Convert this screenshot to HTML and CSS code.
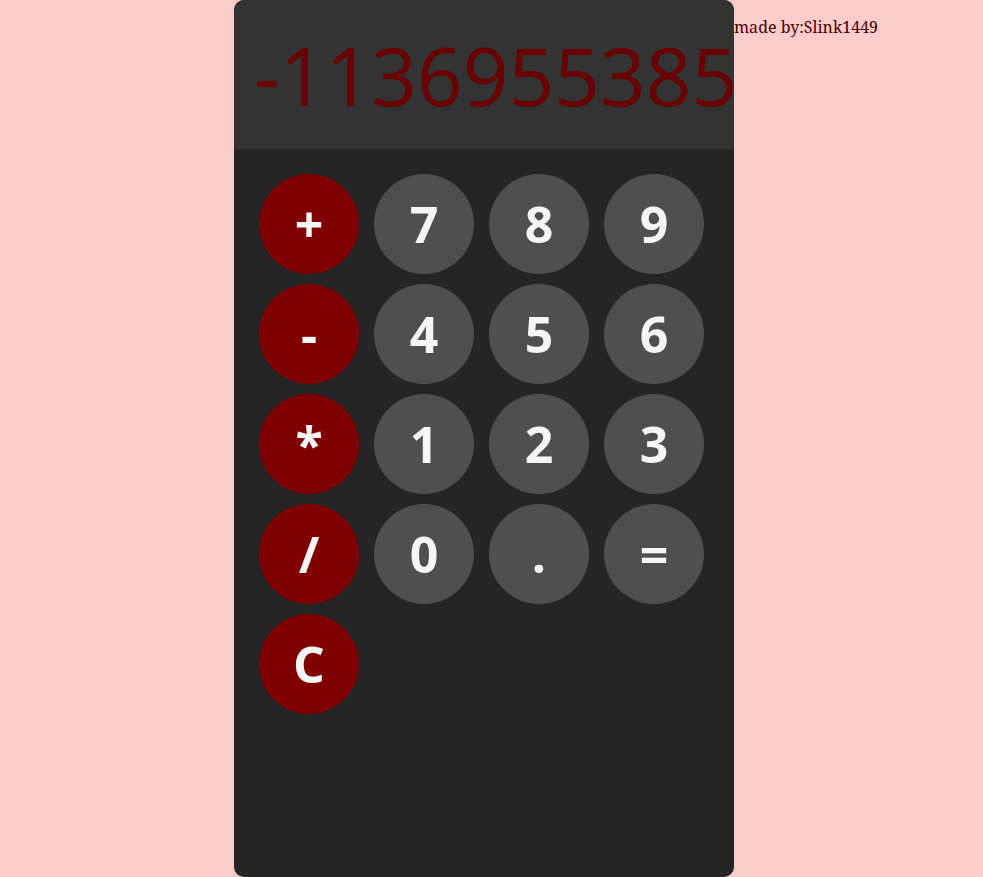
FILE: index.html
```html
<!DOCTYPE html>
<html>
<head>
<meta charset="utf-8">
<link rel="stylesheet" href="styles.css">
</head>
<body>
<div class="page">
  <div class="calc">
    <div class="display">-1136955385</div>
    <div class="keys">
      <div class="key op">+</div>
      <div class="key">7</div>
      <div class="key">8</div>
      <div class="key">9</div>
      <div class="key op">-</div>
      <div class="key">4</div>
      <div class="key">5</div>
      <div class="key">6</div>
      <div class="key op">*</div>
      <div class="key">1</div>
      <div class="key">2</div>
      <div class="key">3</div>
      <div class="key op">/</div>
      <div class="key">0</div>
      <div class="key">.</div>
      <div class="key">=</div>
      <div class="key op">C</div>
    </div>
  </div>
  <div class="credit">made by:Slink1449</div>
</div>
</body>
</html>
```

FILE: styles.css
```css
html, body {
  margin: 0;
  padding: 0;
  background: #ffcccc;
  height: 100%;
}
.page {
  display: flex;
  align-items: flex-start;
  padding-left: 234px;
  height: 877px;
  overflow: hidden;
}
.calc {
  width: 500px;
  height: 877px;
  background: #252525;
  border-radius: 10px;
  overflow: hidden;
  flex-shrink: 0;
}
.display {
  height: 149px;
  background: #333333;
  color: #6a0000;
  font-family: "Open Sans", sans-serif;
  font-size: 80px;
  line-height: 149px;
  padding-left: 20px;
  white-space: nowrap;
  overflow: hidden;
  box-sizing: border-box;
}
.keys {
  display: grid;
  grid-template-columns: repeat(4, 100px);
  column-gap: 15px;
  row-gap: 10px;
  padding: 25px;
}
.key {
  width: 100px;
  height: 100px;
  border-radius: 50%;
  background: #4f4f4f;
  color: #f5f5f5;
  font-family: "Open Sans", sans-serif;
  font-weight: 700;
  font-size: 50px;
  display: flex;
  align-items: center;
  justify-content: center;
  line-height: 1;
}
.key.op {
  background: #800000;
}
.credit {
  font-family: "Noto Serif", "DejaVu Serif", serif;
  font-size: 16px;
  color: #4a0000;
  padding-top: 16px;
  white-space: nowrap;
}
```
